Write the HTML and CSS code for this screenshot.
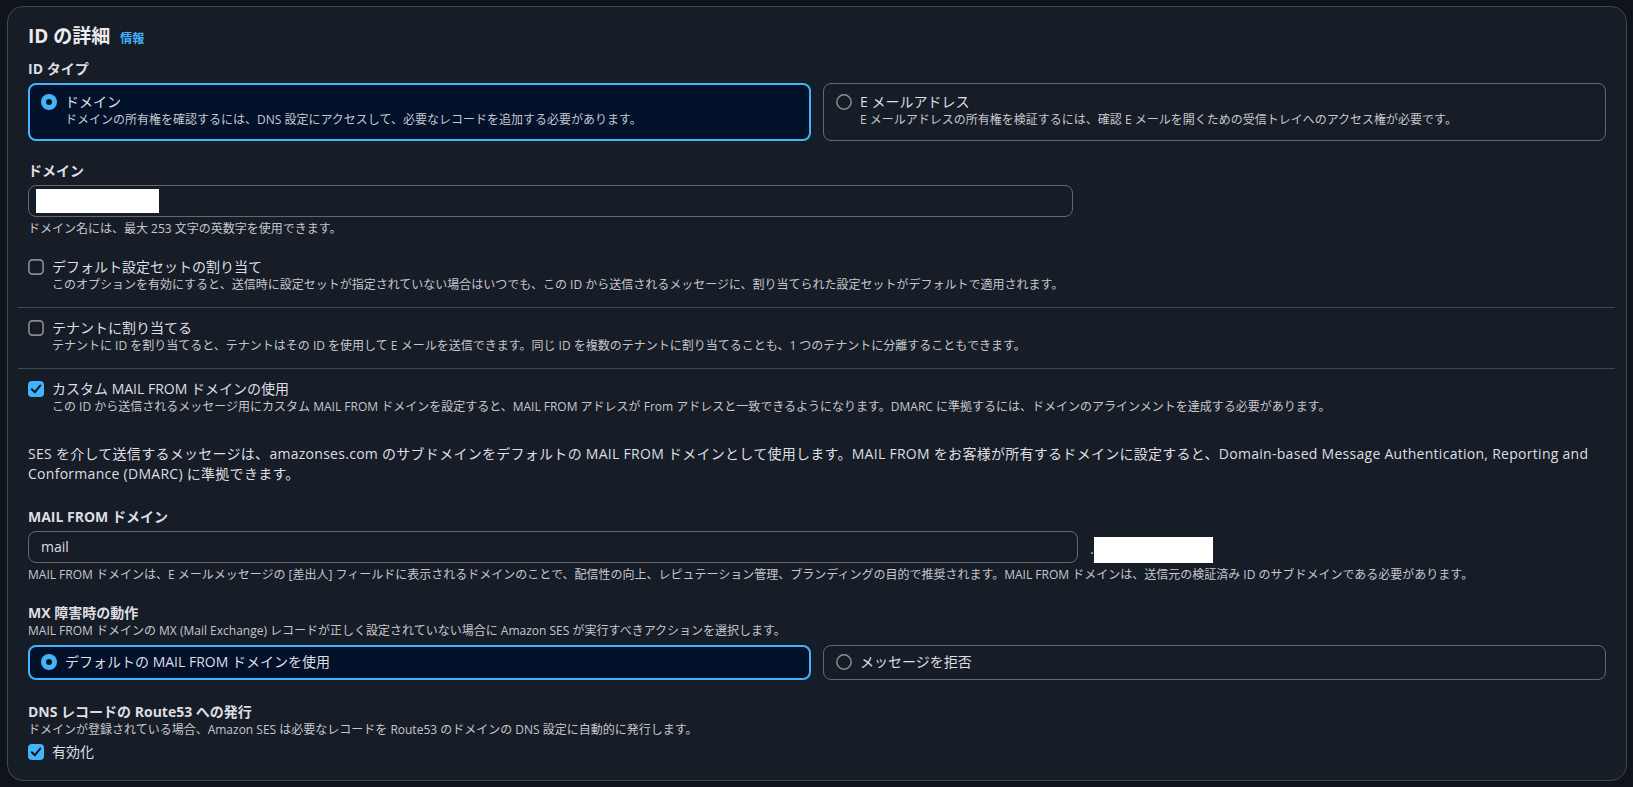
FILE: index.html
```html
<!DOCTYPE html>
<html lang="ja">
<head>
<meta charset="utf-8">
<title>ID の詳細</title>
<link rel="stylesheet" href="styles.css">
</head>
<body>
<div class="card">
  <div class="header">
    <h2 class="title">ID の詳細</h2>
    <a class="info" href="#">情報</a>
  </div>
  <div class="content">
    <div class="field">
      <div class="label">ID タイプ</div>
      <div class="tiles">
        <div class="tile selected">
          <svg class="radio" width="16" height="16" viewBox="0 0 16 16"><circle cx="8" cy="8" r="8" fill="#42b4ff"/><circle cx="8" cy="8" r="3" fill="#0f141a"/></svg>
          <div class="tile-text">
            <div class="tile-label">ドメイン</div>
            <div class="tile-desc">ドメインの所有権を確認するには、DNS 設定にアクセスして、必要なレコードを追加する必要があります。</div>
          </div>
        </div>
        <div class="tile">
          <svg class="radio" width="16" height="16" viewBox="0 0 16 16"><circle cx="8" cy="8" r="7.2" fill="none" stroke="#8c8c94" stroke-width="1.5"/></svg>
          <div class="tile-text">
            <div class="tile-label">E メールアドレス</div>
            <div class="tile-desc">E メールアドレスの所有権を検証するには、確認 E メールを開くための受信トレイへのアクセス権が必要です。</div>
          </div>
        </div>
      </div>
    </div>

    <div class="field">
      <div class="label">ドメイン</div>
      <div class="input domain-input"><div class="redact redact-domain"></div></div>
      <div class="hint">ドメイン名には、最大 253 文字の英数字を使用できます。</div>
    </div>

    <div class="check-list">
      <div class="check-item first">
        <div class="check">
          <svg class="box" width="16" height="16" viewBox="0 0 16 16"><rect x="0.9" y="0.9" width="14.2" height="14.2" rx="3.5" fill="none" stroke="#8c8c94" stroke-width="1.6"/></svg>
          <div class="check-text">
            <div class="check-label">デフォルト設定セットの割り当て</div>
            <div class="check-desc">このオプションを有効にすると、送信時に設定セットが指定されていない場合はいつでも、この ID から送信されるメッセージに、割り当てられた設定セットがデフォルトで適用されます。</div>
          </div>
        </div>
      </div>
      <div class="divider"></div>
      <div class="check-item">
        <div class="check">
          <svg class="box" width="16" height="16" viewBox="0 0 16 16"><rect x="0.9" y="0.9" width="14.2" height="14.2" rx="3.5" fill="none" stroke="#8c8c94" stroke-width="1.6"/></svg>
          <div class="check-text">
            <div class="check-label">テナントに割り当てる</div>
            <div class="check-desc">テナントに ID を割り当てると、テナントはその ID を使用して E メールを送信できます。同じ ID を複数のテナントに割り当てることも、1 つのテナントに分離することもできます。</div>
          </div>
        </div>
      </div>
      <div class="divider"></div>
      <div class="check-item last">
        <div class="check">
          <svg class="box" width="16" height="16" viewBox="0 0 16 16"><rect x="0" y="0" width="16" height="16" rx="4" fill="#42b4ff"/><path d="M3.8 8.2 L6.9 11.2 L12.2 4.6" fill="none" stroke="#0f141a" stroke-width="2" stroke-linecap="round" stroke-linejoin="round"/></svg>
          <div class="check-text">
            <div class="check-label">カスタム MAIL FROM ドメインの使用</div>
            <div class="check-desc">この ID から送信されるメッセージ用にカスタム MAIL FROM ドメインを設定すると、MAIL FROM アドレスが From アドレスと一致できるようになります。DMARC に準拠するには、ドメインのアラインメントを達成する必要があります。</div>
          </div>
        </div>
      </div>
    </div>

    <p class="para">SES を介して送信するメッセージは、amazonses.com のサブドメインをデフォルトの MAIL FROM ドメインとして使用します。MAIL FROM をお客様が所有するドメインに設定すると、Domain-based Message Authentication, Reporting and Conformance (DMARC) に準拠できます。</p>

    <div class="field mailfrom">
      <div class="label">MAIL FROM ドメイン</div>
      <div class="input-row">
        <div class="input mail-input">mail</div>
        <div class="suffix"><span class="dot">.</span><div class="redact redact-suffix"></div></div>
      </div>
      <div class="hint">MAIL FROM ドメインは、E メールメッセージの [差出人] フィールドに表示されるドメインのことで、配信性の向上、レピュテーション管理、ブランディングの目的で推奨されます。MAIL FROM ドメインは、送信元の検証済み ID のサブドメインである必要があります。</div>
    </div>

    <div class="field">
      <div class="label">MX 障害時の動作</div>
      <div class="field-desc">MAIL FROM ドメインの MX (Mail Exchange) レコードが正しく設定されていない場合に Amazon SES が実行すべきアクションを選択します。</div>
      <div class="tiles compact">
        <div class="tile selected">
          <svg class="radio" width="16" height="16" viewBox="0 0 16 16"><circle cx="8" cy="8" r="8" fill="#42b4ff"/><circle cx="8" cy="8" r="3" fill="#0f141a"/></svg>
          <div class="tile-text">
            <div class="tile-label">デフォルトの MAIL FROM ドメインを使用</div>
          </div>
        </div>
        <div class="tile">
          <svg class="radio" width="16" height="16" viewBox="0 0 16 16"><circle cx="8" cy="8" r="7.2" fill="none" stroke="#8c8c94" stroke-width="1.5"/></svg>
          <div class="tile-text">
            <div class="tile-label">メッセージを拒否</div>
          </div>
        </div>
      </div>
    </div>

    <div class="field dns">
      <div class="label">DNS レコードの Route53 への発行</div>
      <div class="field-desc">ドメインが登録されている場合、Amazon SES は必要なレコードを Route53 のドメインの DNS 設定に自動的に発行します。</div>
      <div class="check enable">
        <svg class="box" width="16" height="16" viewBox="0 0 16 16"><rect x="0" y="0" width="16" height="16" rx="4" fill="#42b4ff"/><path d="M3.8 8.2 L6.9 11.2 L12.2 4.6" fill="none" stroke="#0f141a" stroke-width="2" stroke-linecap="round" stroke-linejoin="round"/></svg>
        <div class="check-text">
          <div class="check-label">有効化</div>
        </div>
      </div>
    </div>
  </div>
</div>
</body>
</html>
```

FILE: styles.css
```css
* { box-sizing: border-box; }

html, body { margin: 0; }

body {
  background: #0f141a;
  padding: 6px 6px 6px 7px;
  font-family: "Open Sans", "Noto Sans CJK JP", sans-serif;
  font-size: 14px;
  line-height: 20px;
  color: #dedee3;
}

.card {
  background: #161d26;
  border: 1px solid #424650;
  border-radius: 16px;
  padding: 17px 20px 18px;
}

.header {
  display: flex;
  align-items: baseline;
  gap: 10px;
}

.title {
  margin: 0;
  font-size: 19px;
  line-height: 24px;
  font-weight: 700;
  color: #ebebf0;
}

.info {
  font-size: 12px;
  line-height: 16px;
  font-weight: 700;
  color: #42b4ff;
  text-decoration: none;
}

.content {
  display: flex;
  flex-direction: column;
  gap: 20px;
  margin-top: 11px;
}

.field {
  display: flex;
  flex-direction: column;
}

.label {
  font-weight: 700;
  line-height: 20px;
  color: #dedee3;
}

.field-desc {
  font-size: 12px;
  line-height: 16px;
  color: #c6c6cd;
}

.tiles {
  display: grid;
  grid-template-columns: 1fr 1fr;
  gap: 12px;
  margin-top: 4px;
}

.tiles.compact { margin-top: 6px; }

.tile {
  display: flex;
  align-items: flex-start;
  gap: 8px;
  border: 1px solid #656871;
  border-radius: 8px;
  padding: 8px 12px 12px;
}

.tile.selected {
  border: 2px solid #42b4ff;
  background: #001129;
  padding: 7px 11px 11px;
}

.compact .tile { padding: 6px 12px 7px; }
.compact .tile.selected { padding: 5px 11px 6px; }

.radio {
  flex-shrink: 0;
  margin-top: 2px;
}

.tile-label {
  font-size: 14px;
  line-height: 20px;
  color: #dedee3;
}

.tile-desc {
  font-size: 12px;
  line-height: 16px;
  color: #c6c6cd;
}

.input {
  height: 32px;
  border: 1px solid #656871;
  border-radius: 8px;
  display: flex;
  align-items: center;
  padding: 0 12px;
  color: #dedee3;
}

.domain-input {
  width: 1045px;
  margin-top: 4px;
  padding-left: 7px;
}

.redact { background: #ffffff; }

.redact-domain {
  width: 123px;
  height: 24px;
}

.input-row {
  display: flex;
  align-items: flex-end;
  margin-top: 4px;
}

.mail-input { width: 1050px; }

.suffix {
  display: flex;
  align-items: flex-end;
  margin-left: 12px;
}

.dot {
  color: #c6c6cd;
  line-height: 20px;
  margin-bottom: 4px;
}

.redact-suffix {
  width: 119px;
  height: 26px;
}

.hint {
  margin-top: 4px;
  font-size: 12px;
  line-height: 16px;
  color: #c6c6cd;
}

.check-list {
  display: flex;
  flex-direction: column;
}

.check-item { padding: 10px 0 14px; }
.check-item.first { padding-top: 0; }
.check-item.last { padding-bottom: 0; }

.divider {
  height: 1px;
  background: #424650;
  margin: 0 -9px 0 -10px;
}

.check {
  display: flex;
  align-items: flex-start;
  gap: 8px;
}

.box {
  flex-shrink: 0;
  margin-top: 2px;
}

.check-label {
  font-size: 14px;
  line-height: 20px;
  color: #dedee3;
}

.check-desc {
  font-size: 12px;
  line-height: 16px;
  color: #c6c6cd;
}

.para {
  margin: 9px 0 0;
  color: #dedee3;
  letter-spacing: 0.28px;
}

.mailfrom { margin-top: 3px; }

.dns { margin-top: 2px; }

.check.enable { margin-top: 4px; }
```
